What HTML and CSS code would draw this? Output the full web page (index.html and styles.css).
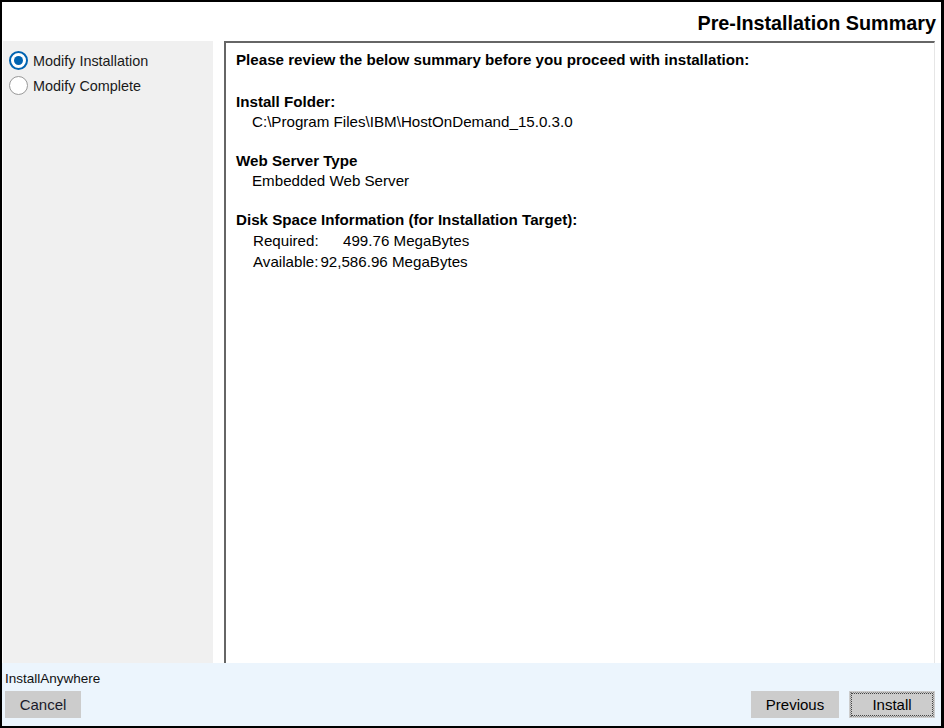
FILE: index.html
```html
<!DOCTYPE html>
<html>
<head>
<meta charset="utf-8">
<link rel="stylesheet" href="styles.css">
</head>
<body>
<div class="window">
  <div class="header">
    <h1 class="title">Pre-Installation Summary</h1>
  </div>
  <div class="main">
    <div class="steps">
      <div class="step">
        <span class="radio checked"></span>
        <span class="step-label">Modify Installation</span>
      </div>
      <div class="step">
        <span class="radio"></span>
        <span class="step-label">Modify Complete</span>
      </div>
    </div>
    <div class="content">
      <p class="intro">Please review the below summary before you proceed with installation:</p>
      <div class="section">
        <div class="sec-title">Install Folder:</div>
        <div class="sec-value">C:\Program Files\IBM\HostOnDemand_15.0.3.0</div>
      </div>
      <div class="section">
        <div class="sec-title">Web Server Type</div>
        <div class="sec-value">Embedded Web Server</div>
      </div>
      <div class="section">
        <div class="sec-title">Disk Space Information (for Installation Target):</div>
        <div class="disk-row"><span class="disk-key req">Required:</span><span>499.76 MegaBytes</span></div>
        <div class="disk-row"><span class="disk-key">Available:</span><span>92,586.96 MegaBytes</span></div>
      </div>
    </div>
  </div>
  <div class="footer">
    <div class="brand">InstallAnywhere</div>
    <div class="buttons">
      <button class="btn cancel">Cancel</button>
      <div class="nav">
        <button class="btn prev">Previous</button>
        <button class="btn install"><span class="focus">Install</span></button>
      </div>
    </div>
  </div>
</div>
</body>
</html>
```

FILE: styles.css
```css
* { box-sizing: border-box; }
html, body { margin: 0; padding: 0; }
body {
  width: 944px;
  height: 728px;
  font-family: "Liberation Sans", Arial, sans-serif;
  color: #000;
  background: #fff;
}
.window {
  width: 944px;
  height: 728px;
  border: 2px solid #000;
  border-right-width: 3px;
  background: #fff;
  display: flex;
  flex-direction: column;
}
.header {
  height: 39px;
  display: flex;
  justify-content: flex-end;
  align-items: flex-start;
  padding-right: 5px;
}
.title {
  margin: 9px 0 0 0;
  font-size: 19.8px;
  font-weight: bold;
  line-height: 24px;
  color: #000;
}
.main {
  flex: 1;
  display: flex;
  padding-left: 1px;
  padding-right: 6px;
}
.steps {
  width: 210px;
  background: #f0f0f0;
  padding-top: 7px;
  margin-right: 11px;
}
.step {
  display: flex;
  align-items: center;
  height: 25px;
  padding-left: 6px;
}
.radio {
  width: 19px;
  height: 19px;
  border-radius: 50%;
  border: 1px solid #999;
  background: #fff;
  margin-right: 5px;
  position: relative;
  flex: none;
}
.radio.checked {
  border: 2px solid #0063b1;
}
.radio.checked::after {
  content: "";
  position: absolute;
  left: 3px;
  top: 3px;
  width: 9px;
  height: 9px;
  border-radius: 50%;
  background: #0063b1;
}
.step-label {
  font-size: 14.4px;
  color: #1a1a1a;
}
.content {
  flex: 1;
  border-top: 2px solid #666;
  border-left: 2px solid #666;
  border-right: 1px solid #e6e6e6;
  padding: 7px 10px 0 10px;
  font-size: 15.15px;
}
.intro {
  margin: 0 0 22px 0;
  font-weight: bold;
  line-height: 20px;
}
.section {
  margin-bottom: 19px;
}
.sec-title {
  font-weight: bold;
  line-height: 20px;
}
.sec-value {
  padding-left: 16px;
  line-height: 20px;
}
.disk-row {
  display: flex;
  padding-left: 17px;
  line-height: 21px;
}
.disk-key { margin-right: 2px; }
.disk-key.req { width: 88px; }
.footer {
  height: 63px;
  background: #ecf5fd;
  padding: 8px 6px 6px 3px;
  display: flex;
  flex-direction: column;
}
.brand {
  font-size: 13.5px;
  color: #111;
  line-height: 16px;
  margin-bottom: 4px;
}
.buttons {
  display: flex;
  justify-content: space-between;
}
.btn {
  height: 27px;
  border: none;
  background: #cccccc;
  font-family: "Liberation Sans", Arial, sans-serif;
  font-size: 15px;
  color: #000;
  padding: 0;
}
.cancel { width: 76px; color: #1a1a2a; }
.nav { display: flex; gap: 10px; }
.prev { width: 88px; }
.install { width: 86px; padding: 2px; }
.focus {
  display: flex;
  align-items: center;
  justify-content: center;
  height: 100%;
  border: 1px dotted #444;
  outline: 1px dotted #888;
}
```
